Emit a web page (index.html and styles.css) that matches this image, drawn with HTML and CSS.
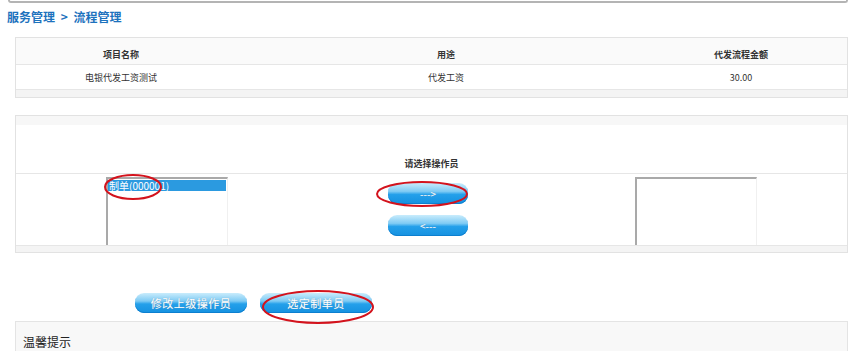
FILE: index.html
```html
<!doctype html>
<html>
<head>
<title>流程管理</title>
<link rel="stylesheet" href="styles.css">
</head>
<body>
<div class="topbar"></div>
<div class="crumb">服务管理 <span class="sep">&gt;</span> 流程管理</div>

<div class="box info">
	<div class="row head">
		<div>项目名称</div><div>用途</div><div>代发流程金额</div><div></div>
	</div>
	<div class="row">
		<div>电银代发工资测试</div><div>代发工资</div><div>30.00</div><div></div>
	</div>
	<div class="strip"></div>
</div>

<div class="box pick">
	<div class="strip top"></div>
	<div class="title">请选择操作员</div>
	<div class="lists">
		<div class="listbox">
			<div class="opt selected">制单(000001)</div>
		</div>
		<div class="moves">
			<button class="btn small">---&gt;</button>
			<button class="btn small">&lt;---</button>
		</div>
		<div class="listbox"></div>
	</div>
	<div class="strip"></div>
</div>

<div class="actions">
	<button class="btn wide">修改上级操作员</button>
	<button class="btn wide">选定制单员</button>
</div>

<div class="tips">温馨提示</div>

<svg class="marks" width="850" height="351" viewBox="0 0 850 351">
	<ellipse cx="133" cy="187" rx="28" ry="12"/>
	<ellipse cx="422" cy="194" rx="45" ry="12"/>
	<ellipse cx="318" cy="307" rx="55" ry="16"/>
</svg>
</body>
</html>
```

FILE: styles.css
```css
body {
  margin: 0;
  font: 12px "Noto Sans CJK SC", "Liberation Sans", sans-serif;
  color: #333;
  background: #fff;
  position: relative;
  height: 351px;
  overflow: hidden;
}
.topbar {
  height: 1px;
  margin: 0 2px 0 8px;
  border: 2px solid #b4b4b4;
  border-top: none;
  border-radius: 0 0 5px 5px;
}
.crumb {
  margin-top: 6px;
  padding-left: 7px;
  font-size: 12px;
  font-weight: bold;
  line-height: 16px;
  color: #1d72bd;
}
.crumb .sep {
  margin: 0 3px;
}

.box {
  margin: 0 2px 0 15px;
  border: 1px solid #e2e2e2;
}
.info {
  margin-top: 12px;
}
.row {
  display: grid;
  grid-template-columns: 210px 440px 150px 1fr;
  height: 24px;
  line-height: 26px;
  font-size: 9px;
  text-align: center;
  border-bottom: 1px solid #e6e6e6;
}
.row.head {
  height: 26px;
  line-height: 34px;
  font-weight: bold;
  background: #fafafa;
}
.strip {
  height: 7px;
  background: #f4f4f4;
}
.strip.top {
  height: 9px;
  background: #f7f7f7;
}

.pick {
  margin-top: 17px;
}
.pick > .strip:last-child {
  height: 6px;
}
.title {
  height: 49px;
  box-sizing: border-box;
  padding: 32px 0 0 0;
  text-align: center;
  font-size: 9px;
  font-weight: bold;
  border-bottom: 1px solid #e6e6e6;
}
.lists {
  display: grid;
  grid-template-columns: 122px 80px 129px;
  column-gap: 160px;
  padding-left: 90px;
  height: 71px;
  align-items: end;
  border-bottom: 1px solid #e6e6e6;
}
.lists > .moves {
  align-self: start;
}
.listbox {
  height: 68px;
  box-sizing: border-box;
  border: 1px solid #f0f0f0;
  border-left: 2px solid #a9a9a9;
  border-top: 2px solid #a9a9a9;
  border-bottom: none;
  padding: 1px 1px 0 0;
}
.lists .listbox:last-child {
  margin-left: 7px;
}
.opt {
  height: 11px;
  line-height: 11px;
  font-size: 10px;
  padding-left: 1px;
}
.opt.selected {
  background: #2b9ae0;
  color: #fff;
}
.moves {
  display: flex;
  flex-direction: column;
  gap: 11px;
  padding-top: 9px;
}

.btn {
  display: block;
  height: 21px;
  border: none;
  border-radius: 9px;
  padding: 0;
  font: 11px "Noto Sans CJK SC", "Liberation Sans", sans-serif;
  color: #fff;
  text-shadow: 0 0 1px #7a9bb2;
  background: linear-gradient(#c9ecfc 0%, #7fcbf4 40%, #24a0ea 55%, #1591e0 100%);
  box-shadow: inset 0 -1px 0 #0c7fcf;
}
.btn.small {
  width: 80px;
  font-size: 10px;
}
.actions {
  display: flex;
  gap: 13px;
  padding-left: 135px;
  margin-top: 40px;
}
.btn.wide {
  width: 112px;
  height: 20px;
  letter-spacing: 0.5px;
}

.tips {
  margin: 8px 2px 0 15px;
  height: 40px;
  box-sizing: border-box;
  padding: 11px 0 0 7px;
  font-size: 12px;
  color: #222;
  background: #f8f8f8;
  border: 1px solid #e4e4e4;
  border-bottom: none;
}

.marks {
  position: absolute;
  left: 0;
  top: 0;
  pointer-events: none;
}
.marks ellipse {
  fill: none;
  stroke: #d3131d;
  stroke-width: 2;
}
```
